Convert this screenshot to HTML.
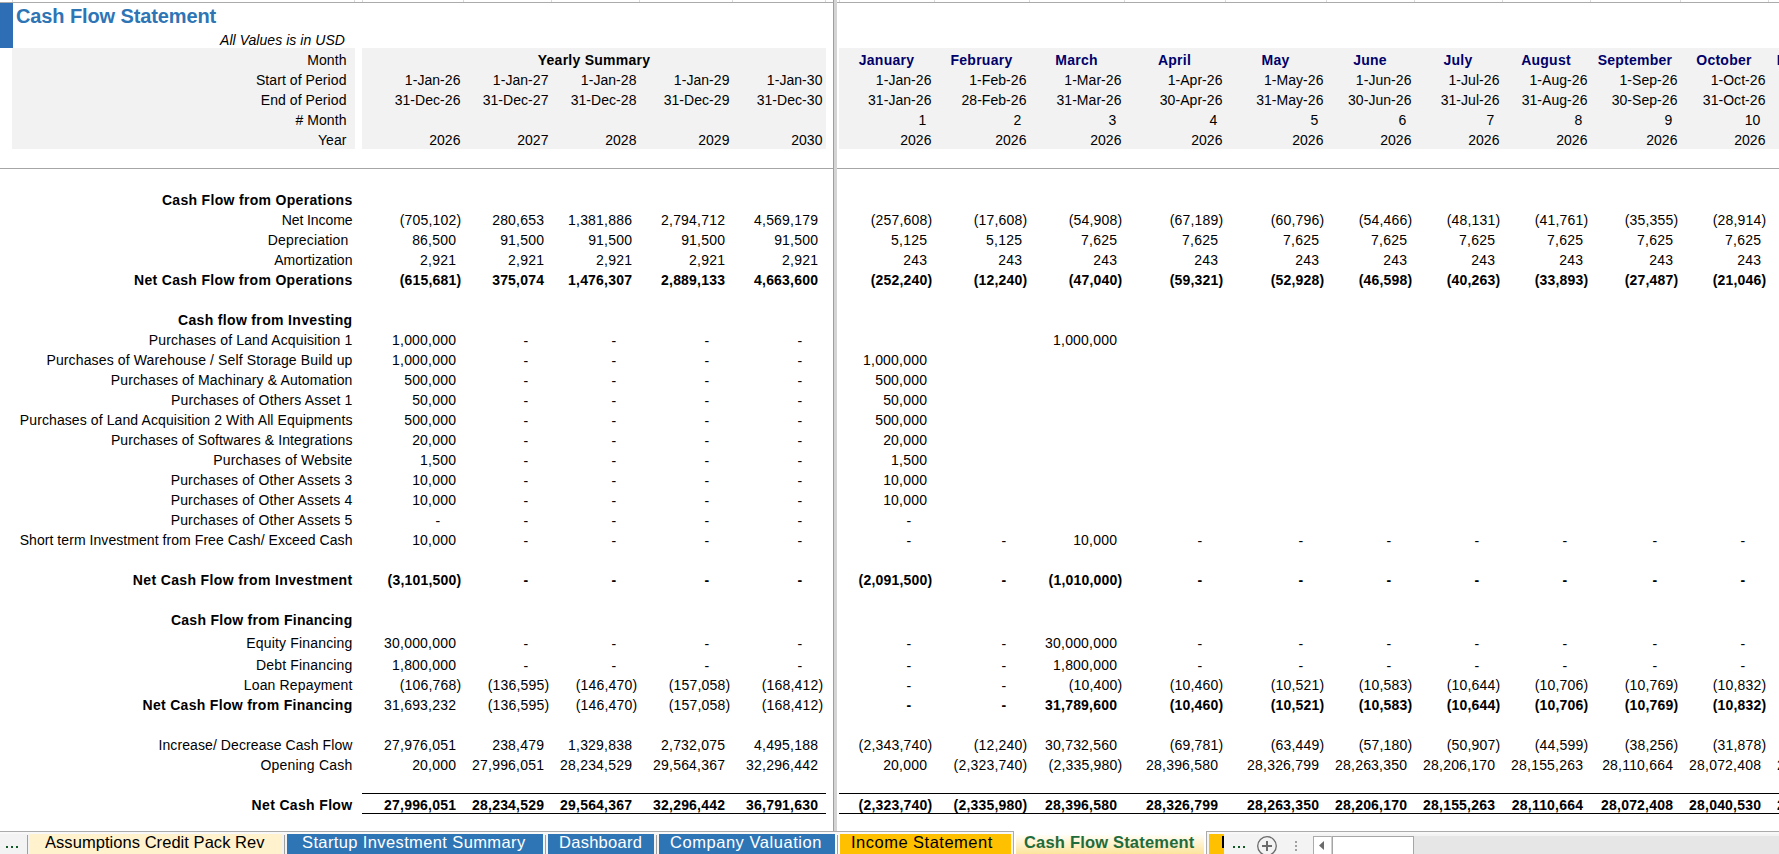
<!DOCTYPE html>
<html><head><meta charset="utf-8"><style>
html,body{margin:0;padding:0;}
body{width:1779px;height:854px;overflow:hidden;position:relative;background:#fff;font-family:"Liberation Sans",sans-serif;font-size:14px;color:#000;}
.r{position:absolute;}
.t{position:absolute;white-space:pre;line-height:0;height:0;text-align:right;letter-spacing:0.05px;}
.tc{position:absolute;white-space:pre;line-height:0;height:0;width:300px;text-align:center;}
.b{font-weight:bold;}
.num{letter-spacing:0.2px;}
.lab{letter-spacing:0.07px;}
.lab.b{letter-spacing:0.25px;}
.navy{color:#00006a;}
.tt{font-size:16.5px;line-height:0;white-space:pre;}
</style></head><body>
<!-- top gridline -->
<div class="r" style="left:0;top:2px;width:1779px;height:1px;background:#ababab"></div>
<div class="r" style="left:12px;top:0;width:1px;height:2px;background:#dadada"></div><div class="r" style="left:354px;top:0;width:1px;height:2px;background:#dadada"></div><div class="r" style="left:362px;top:0;width:1px;height:2px;background:#dadada"></div><div class="r" style="left:463px;top:0;width:1px;height:2px;background:#dadada"></div><div class="r" style="left:551px;top:0;width:1px;height:2px;background:#dadada"></div><div class="r" style="left:639px;top:0;width:1px;height:2px;background:#dadada"></div><div class="r" style="left:732px;top:0;width:1px;height:2px;background:#dadada"></div><div class="r" style="left:825px;top:0;width:1px;height:2px;background:#dadada"></div><div class="r" style="left:839px;top:0;width:1px;height:2px;background:#dadada"></div><div class="r" style="left:934px;top:0;width:1px;height:2px;background:#dadada"></div><div class="r" style="left:1029px;top:0;width:1px;height:2px;background:#dadada"></div><div class="r" style="left:1124px;top:0;width:1px;height:2px;background:#dadada"></div><div class="r" style="left:1225px;top:0;width:1px;height:2px;background:#dadada"></div><div class="r" style="left:1326px;top:0;width:1px;height:2px;background:#dadada"></div><div class="r" style="left:1414px;top:0;width:1px;height:2px;background:#dadada"></div><div class="r" style="left:1502px;top:0;width:1px;height:2px;background:#dadada"></div><div class="r" style="left:1590px;top:0;width:1px;height:2px;background:#dadada"></div><div class="r" style="left:1680px;top:0;width:1px;height:2px;background:#dadada"></div><div class="r" style="left:1768px;top:0;width:1px;height:2px;background:#dadada"></div>
<!-- blue bar -->
<div class="r" style="left:0;top:3px;width:13px;height:45px;background:#2e6eb5"></div>
<!-- gray header fills -->
<div class="r" style="left:12px;top:48px;width:343px;height:101px;background:#f2f2f2"></div>
<div class="r" style="left:362px;top:48px;width:464px;height:101px;background:#f2f2f2"></div>
<div class="r" style="left:839px;top:48px;width:940px;height:101px;background:#f2f2f2"></div>
<!-- freeze line horizontal -->
<div class="r" style="left:0;top:168px;width:1779px;height:1px;background:#a6a6a6"></div>
<!-- net cash flow borders -->
<div class="r" style="left:362px;top:793px;width:464px;height:1px;background:#000"></div>
<div class="r" style="left:362px;top:813px;width:464px;height:1px;background:#000"></div>
<div class="r" style="left:839px;top:793px;width:940px;height:1px;background:#000"></div>
<div class="r" style="left:839px;top:813px;width:940px;height:1px;background:#000"></div>
<!-- split bar -->
<div class="r" style="left:833px;top:0;width:1px;height:832px;background:#9e9e9e"></div>
<div class="r" style="left:834px;top:0;width:3px;height:832px;background:#d4d4d4"></div>
<!-- title -->
<div class="r" style="left:16px;top:16px;line-height:0;font-size:20px;font-weight:bold;letter-spacing:-0.11px;color:#2e75b6;white-space:pre">Cash Flow Statement</div>
<div class="t" style="right:1434px;top:40px;font-style:italic">All Values is in USD</div>
<div class="t b lab" style="right:1426.50px;top:200px;letter-spacing:0.31px">Cash Flow from Operations</div>
<div class="t lab" style="right:1426.50px;top:220px;letter-spacing:-0.08px">Net Income</div>
<div class="t  num" style="right:1317.60px;top:220px;padding-right:0.00px">(705,102)</div>
<div class="t  num" style="right:1230.20px;top:220px;padding-right:4.66px">280,653</div>
<div class="t  num" style="right:1142.20px;top:220px;padding-right:4.66px">1,381,886</div>
<div class="t  num" style="right:1049.20px;top:220px;padding-right:4.66px">2,794,712</div>
<div class="t  num" style="right:956.20px;top:220px;padding-right:4.66px">4,569,179</div>
<div class="t  num" style="right:846.60px;top:220px;padding-right:0.00px">(257,608)</div>
<div class="t  num" style="right:751.60px;top:220px;padding-right:0.00px">(17,608)</div>
<div class="t  num" style="right:656.60px;top:220px;padding-right:0.00px">(54,908)</div>
<div class="t  num" style="right:555.60px;top:220px;padding-right:0.00px">(67,189)</div>
<div class="t  num" style="right:454.60px;top:220px;padding-right:0.00px">(60,796)</div>
<div class="t  num" style="right:366.60px;top:220px;padding-right:0.00px">(54,466)</div>
<div class="t  num" style="right:278.60px;top:220px;padding-right:0.00px">(48,131)</div>
<div class="t  num" style="right:190.60px;top:220px;padding-right:0.00px">(41,761)</div>
<div class="t  num" style="right:100.60px;top:220px;padding-right:0.00px">(35,355)</div>
<div class="t  num" style="right:12.60px;top:220px;padding-right:0.00px">(28,914)</div>
<div class="t lab" style="right:1426.50px;top:240px;letter-spacing:0.178px">Depreciation&nbsp;</div>
<div class="t  num" style="right:1318.20px;top:240px;padding-right:4.66px">86,500</div>
<div class="t  num" style="right:1230.20px;top:240px;padding-right:4.66px">91,500</div>
<div class="t  num" style="right:1142.20px;top:240px;padding-right:4.66px">91,500</div>
<div class="t  num" style="right:1049.20px;top:240px;padding-right:4.66px">91,500</div>
<div class="t  num" style="right:956.20px;top:240px;padding-right:4.66px">91,500</div>
<div class="t  num" style="right:847.20px;top:240px;padding-right:4.66px">5,125</div>
<div class="t  num" style="right:752.20px;top:240px;padding-right:4.66px">5,125</div>
<div class="t  num" style="right:657.20px;top:240px;padding-right:4.66px">7,625</div>
<div class="t  num" style="right:556.20px;top:240px;padding-right:4.66px">7,625</div>
<div class="t  num" style="right:455.20px;top:240px;padding-right:4.66px">7,625</div>
<div class="t  num" style="right:367.20px;top:240px;padding-right:4.66px">7,625</div>
<div class="t  num" style="right:279.20px;top:240px;padding-right:4.66px">7,625</div>
<div class="t  num" style="right:191.20px;top:240px;padding-right:4.66px">7,625</div>
<div class="t  num" style="right:101.20px;top:240px;padding-right:4.66px">7,625</div>
<div class="t  num" style="right:13.20px;top:240px;padding-right:4.66px">7,625</div>
<div class="t lab" style="right:1426.50px;top:260px;letter-spacing:0.037px">Amortization</div>
<div class="t  num" style="right:1318.20px;top:260px;padding-right:4.66px">2,921</div>
<div class="t  num" style="right:1230.20px;top:260px;padding-right:4.66px">2,921</div>
<div class="t  num" style="right:1142.20px;top:260px;padding-right:4.66px">2,921</div>
<div class="t  num" style="right:1049.20px;top:260px;padding-right:4.66px">2,921</div>
<div class="t  num" style="right:956.20px;top:260px;padding-right:4.66px">2,921</div>
<div class="t  num" style="right:847.20px;top:260px;padding-right:4.66px">243</div>
<div class="t  num" style="right:752.20px;top:260px;padding-right:4.66px">243</div>
<div class="t  num" style="right:657.20px;top:260px;padding-right:4.66px">243</div>
<div class="t  num" style="right:556.20px;top:260px;padding-right:4.66px">243</div>
<div class="t  num" style="right:455.20px;top:260px;padding-right:4.66px">243</div>
<div class="t  num" style="right:367.20px;top:260px;padding-right:4.66px">243</div>
<div class="t  num" style="right:279.20px;top:260px;padding-right:4.66px">243</div>
<div class="t  num" style="right:191.20px;top:260px;padding-right:4.66px">243</div>
<div class="t  num" style="right:101.20px;top:260px;padding-right:4.66px">243</div>
<div class="t  num" style="right:13.20px;top:260px;padding-right:4.66px">243</div>
<div class="t b lab" style="right:1426.50px;top:280px;letter-spacing:0.319px">Net Cash Flow from Operations</div>
<div class="t b num" style="right:1317.60px;top:280px;padding-right:0.00px">(615,681)</div>
<div class="t b num" style="right:1230.20px;top:280px;padding-right:4.66px">375,074</div>
<div class="t b num" style="right:1142.20px;top:280px;padding-right:4.66px">1,476,307</div>
<div class="t b num" style="right:1049.20px;top:280px;padding-right:4.66px">2,889,133</div>
<div class="t b num" style="right:956.20px;top:280px;padding-right:4.66px">4,663,600</div>
<div class="t b num" style="right:846.60px;top:280px;padding-right:0.00px">(252,240)</div>
<div class="t b num" style="right:751.60px;top:280px;padding-right:0.00px">(12,240)</div>
<div class="t b num" style="right:656.60px;top:280px;padding-right:0.00px">(47,040)</div>
<div class="t b num" style="right:555.60px;top:280px;padding-right:0.00px">(59,321)</div>
<div class="t b num" style="right:454.60px;top:280px;padding-right:0.00px">(52,928)</div>
<div class="t b num" style="right:366.60px;top:280px;padding-right:0.00px">(46,598)</div>
<div class="t b num" style="right:278.60px;top:280px;padding-right:0.00px">(40,263)</div>
<div class="t b num" style="right:190.60px;top:280px;padding-right:0.00px">(33,893)</div>
<div class="t b num" style="right:100.60px;top:280px;padding-right:0.00px">(27,487)</div>
<div class="t b num" style="right:12.60px;top:280px;padding-right:0.00px">(21,046)</div>
<div class="t b lab" style="right:1426.50px;top:320px;letter-spacing:0.333px">Cash flow from Investing</div>
<div class="t lab" style="right:1426.50px;top:340px;letter-spacing:0.144px">Purchases of Land Acquisition 1</div>
<div class="t  num" style="right:1318.20px;top:340px;padding-right:4.66px">1,000,000</div>
<div class="t " style="right:1230.60px;top:341px;padding-right:20.23px">-</div>
<div class="t " style="right:1142.60px;top:341px;padding-right:20.23px">-</div>
<div class="t " style="right:1049.60px;top:341px;padding-right:20.23px">-</div>
<div class="t " style="right:956.60px;top:341px;padding-right:20.23px">-</div>
<div class="t  num" style="right:657.20px;top:340px;padding-right:4.66px">1,000,000</div>
<div class="t lab" style="right:1426.50px;top:360px;letter-spacing:0.135px">Purchases of Warehouse / Self Storage Build up</div>
<div class="t  num" style="right:1318.20px;top:360px;padding-right:4.66px">1,000,000</div>
<div class="t " style="right:1230.60px;top:361px;padding-right:20.23px">-</div>
<div class="t " style="right:1142.60px;top:361px;padding-right:20.23px">-</div>
<div class="t " style="right:1049.60px;top:361px;padding-right:20.23px">-</div>
<div class="t " style="right:956.60px;top:361px;padding-right:20.23px">-</div>
<div class="t  num" style="right:847.20px;top:360px;padding-right:4.66px">1,000,000</div>
<div class="t lab" style="right:1426.50px;top:380px;letter-spacing:0.124px">Purchases of Machinary &amp; Automation</div>
<div class="t  num" style="right:1318.20px;top:380px;padding-right:4.66px">500,000</div>
<div class="t " style="right:1230.60px;top:381px;padding-right:20.23px">-</div>
<div class="t " style="right:1142.60px;top:381px;padding-right:20.23px">-</div>
<div class="t " style="right:1049.60px;top:381px;padding-right:20.23px">-</div>
<div class="t " style="right:956.60px;top:381px;padding-right:20.23px">-</div>
<div class="t  num" style="right:847.20px;top:380px;padding-right:4.66px">500,000</div>
<div class="t lab" style="right:1426.50px;top:400px;letter-spacing:0.148px">Purchases of Others Asset 1</div>
<div class="t  num" style="right:1318.20px;top:400px;padding-right:4.66px">50,000</div>
<div class="t " style="right:1230.60px;top:401px;padding-right:20.23px">-</div>
<div class="t " style="right:1142.60px;top:401px;padding-right:20.23px">-</div>
<div class="t " style="right:1049.60px;top:401px;padding-right:20.23px">-</div>
<div class="t " style="right:956.60px;top:401px;padding-right:20.23px">-</div>
<div class="t  num" style="right:847.20px;top:400px;padding-right:4.66px">50,000</div>
<div class="t lab" style="right:1426.50px;top:420px;letter-spacing:0.099px">Purchases of Land Acquisition 2 With All Equipments</div>
<div class="t  num" style="right:1318.20px;top:420px;padding-right:4.66px">500,000</div>
<div class="t " style="right:1230.60px;top:421px;padding-right:20.23px">-</div>
<div class="t " style="right:1142.60px;top:421px;padding-right:20.23px">-</div>
<div class="t " style="right:1049.60px;top:421px;padding-right:20.23px">-</div>
<div class="t " style="right:956.60px;top:421px;padding-right:20.23px">-</div>
<div class="t  num" style="right:847.20px;top:420px;padding-right:4.66px">500,000</div>
<div class="t lab" style="right:1426.50px;top:440px;letter-spacing:0.094px">Purchases of Softwares &amp; Integrations</div>
<div class="t  num" style="right:1318.20px;top:440px;padding-right:4.66px">20,000</div>
<div class="t " style="right:1230.60px;top:441px;padding-right:20.23px">-</div>
<div class="t " style="right:1142.60px;top:441px;padding-right:20.23px">-</div>
<div class="t " style="right:1049.60px;top:441px;padding-right:20.23px">-</div>
<div class="t " style="right:956.60px;top:441px;padding-right:20.23px">-</div>
<div class="t  num" style="right:847.20px;top:440px;padding-right:4.66px">20,000</div>
<div class="t lab" style="right:1426.50px;top:460px;letter-spacing:0.165px">Purchases of Website</div>
<div class="t  num" style="right:1318.20px;top:460px;padding-right:4.66px">1,500</div>
<div class="t " style="right:1230.60px;top:461px;padding-right:20.23px">-</div>
<div class="t " style="right:1142.60px;top:461px;padding-right:20.23px">-</div>
<div class="t " style="right:1049.60px;top:461px;padding-right:20.23px">-</div>
<div class="t " style="right:956.60px;top:461px;padding-right:20.23px">-</div>
<div class="t  num" style="right:847.20px;top:460px;padding-right:4.66px">1,500</div>
<div class="t lab" style="right:1426.50px;top:480px;letter-spacing:0.163px">Purchases of Other Assets 3</div>
<div class="t  num" style="right:1318.20px;top:480px;padding-right:4.66px">10,000</div>
<div class="t " style="right:1230.60px;top:481px;padding-right:20.23px">-</div>
<div class="t " style="right:1142.60px;top:481px;padding-right:20.23px">-</div>
<div class="t " style="right:1049.60px;top:481px;padding-right:20.23px">-</div>
<div class="t " style="right:956.60px;top:481px;padding-right:20.23px">-</div>
<div class="t  num" style="right:847.20px;top:480px;padding-right:4.66px">10,000</div>
<div class="t lab" style="right:1426.50px;top:500px;letter-spacing:0.163px">Purchases of Other Assets 4</div>
<div class="t  num" style="right:1318.20px;top:500px;padding-right:4.66px">10,000</div>
<div class="t " style="right:1230.60px;top:501px;padding-right:20.23px">-</div>
<div class="t " style="right:1142.60px;top:501px;padding-right:20.23px">-</div>
<div class="t " style="right:1049.60px;top:501px;padding-right:20.23px">-</div>
<div class="t " style="right:956.60px;top:501px;padding-right:20.23px">-</div>
<div class="t  num" style="right:847.20px;top:500px;padding-right:4.66px">10,000</div>
<div class="t lab" style="right:1426.50px;top:520px;letter-spacing:0.163px">Purchases of Other Assets 5</div>
<div class="t " style="right:1318.60px;top:521px;padding-right:20.23px">-</div>
<div class="t " style="right:1230.60px;top:521px;padding-right:20.23px">-</div>
<div class="t " style="right:1142.60px;top:521px;padding-right:20.23px">-</div>
<div class="t " style="right:1049.60px;top:521px;padding-right:20.23px">-</div>
<div class="t " style="right:956.60px;top:521px;padding-right:20.23px">-</div>
<div class="t " style="right:847.60px;top:521px;padding-right:20.23px">-</div>
<div class="t lab" style="right:1426.50px;top:540px;letter-spacing:0.06px">Short term Investment from Free Cash/ Exceed Cash</div>
<div class="t  num" style="right:1318.20px;top:540px;padding-right:4.66px">10,000</div>
<div class="t " style="right:1230.60px;top:541px;padding-right:20.23px">-</div>
<div class="t " style="right:1142.60px;top:541px;padding-right:20.23px">-</div>
<div class="t " style="right:1049.60px;top:541px;padding-right:20.23px">-</div>
<div class="t " style="right:956.60px;top:541px;padding-right:20.23px">-</div>
<div class="t " style="right:847.60px;top:541px;padding-right:20.23px">-</div>
<div class="t " style="right:752.60px;top:541px;padding-right:20.23px">-</div>
<div class="t  num" style="right:657.20px;top:540px;padding-right:4.66px">10,000</div>
<div class="t " style="right:556.60px;top:541px;padding-right:20.23px">-</div>
<div class="t " style="right:455.60px;top:541px;padding-right:20.23px">-</div>
<div class="t " style="right:367.60px;top:541px;padding-right:20.23px">-</div>
<div class="t " style="right:279.60px;top:541px;padding-right:20.23px">-</div>
<div class="t " style="right:191.60px;top:541px;padding-right:20.23px">-</div>
<div class="t " style="right:101.60px;top:541px;padding-right:20.23px">-</div>
<div class="t " style="right:13.60px;top:541px;padding-right:20.23px">-</div>
<div class="t b lab" style="right:1426.50px;top:580px;letter-spacing:0.36px">Net Cash Flow from Investment</div>
<div class="t b num" style="right:1317.60px;top:580px;padding-right:0.00px">(3,101,500)</div>
<div class="t b" style="right:1230.60px;top:580px;padding-right:20.23px">-</div>
<div class="t b" style="right:1142.60px;top:580px;padding-right:20.23px">-</div>
<div class="t b" style="right:1049.60px;top:580px;padding-right:20.23px">-</div>
<div class="t b" style="right:956.60px;top:580px;padding-right:20.23px">-</div>
<div class="t b num" style="right:846.60px;top:580px;padding-right:0.00px">(2,091,500)</div>
<div class="t b" style="right:752.60px;top:580px;padding-right:20.23px">-</div>
<div class="t b num" style="right:656.60px;top:580px;padding-right:0.00px">(1,010,000)</div>
<div class="t b" style="right:556.60px;top:580px;padding-right:20.23px">-</div>
<div class="t b" style="right:455.60px;top:580px;padding-right:20.23px">-</div>
<div class="t b" style="right:367.60px;top:580px;padding-right:20.23px">-</div>
<div class="t b" style="right:279.60px;top:580px;padding-right:20.23px">-</div>
<div class="t b" style="right:191.60px;top:580px;padding-right:20.23px">-</div>
<div class="t b" style="right:101.60px;top:580px;padding-right:20.23px">-</div>
<div class="t b" style="right:13.60px;top:580px;padding-right:20.23px">-</div>
<div class="t b lab" style="right:1426.50px;top:620px;letter-spacing:0.275px">Cash Flow from Financing</div>
<div class="t lab" style="right:1426.50px;top:643px;letter-spacing:0.17px">Equity Financing</div>
<div class="t  num" style="right:1318.20px;top:643px;padding-right:4.66px">30,000,000</div>
<div class="t " style="right:1230.60px;top:644px;padding-right:20.23px">-</div>
<div class="t " style="right:1142.60px;top:644px;padding-right:20.23px">-</div>
<div class="t " style="right:1049.60px;top:644px;padding-right:20.23px">-</div>
<div class="t " style="right:956.60px;top:644px;padding-right:20.23px">-</div>
<div class="t " style="right:847.60px;top:644px;padding-right:20.23px">-</div>
<div class="t " style="right:752.60px;top:644px;padding-right:20.23px">-</div>
<div class="t  num" style="right:657.20px;top:643px;padding-right:4.66px">30,000,000</div>
<div class="t " style="right:556.60px;top:644px;padding-right:20.23px">-</div>
<div class="t " style="right:455.60px;top:644px;padding-right:20.23px">-</div>
<div class="t " style="right:367.60px;top:644px;padding-right:20.23px">-</div>
<div class="t " style="right:279.60px;top:644px;padding-right:20.23px">-</div>
<div class="t " style="right:191.60px;top:644px;padding-right:20.23px">-</div>
<div class="t " style="right:101.60px;top:644px;padding-right:20.23px">-</div>
<div class="t " style="right:13.60px;top:644px;padding-right:20.23px">-</div>
<div class="t lab" style="right:1426.50px;top:665px;letter-spacing:0.163px">Debt Financing</div>
<div class="t  num" style="right:1318.20px;top:665px;padding-right:4.66px">1,800,000</div>
<div class="t " style="right:1230.60px;top:666px;padding-right:20.23px">-</div>
<div class="t " style="right:1142.60px;top:666px;padding-right:20.23px">-</div>
<div class="t " style="right:1049.60px;top:666px;padding-right:20.23px">-</div>
<div class="t " style="right:956.60px;top:666px;padding-right:20.23px">-</div>
<div class="t " style="right:847.60px;top:666px;padding-right:20.23px">-</div>
<div class="t " style="right:752.60px;top:666px;padding-right:20.23px">-</div>
<div class="t  num" style="right:657.20px;top:665px;padding-right:4.66px">1,800,000</div>
<div class="t " style="right:556.60px;top:666px;padding-right:20.23px">-</div>
<div class="t " style="right:455.60px;top:666px;padding-right:20.23px">-</div>
<div class="t " style="right:367.60px;top:666px;padding-right:20.23px">-</div>
<div class="t " style="right:279.60px;top:666px;padding-right:20.23px">-</div>
<div class="t " style="right:191.60px;top:666px;padding-right:20.23px">-</div>
<div class="t " style="right:101.60px;top:666px;padding-right:20.23px">-</div>
<div class="t " style="right:13.60px;top:666px;padding-right:20.23px">-</div>
<div class="t lab" style="right:1426.50px;top:685px;letter-spacing:0.149px">Loan Repayment</div>
<div class="t  num" style="right:1317.60px;top:685px;padding-right:0.00px">(106,768)</div>
<div class="t  num" style="right:1229.60px;top:685px;padding-right:0.00px">(136,595)</div>
<div class="t  num" style="right:1141.60px;top:685px;padding-right:0.00px">(146,470)</div>
<div class="t  num" style="right:1048.60px;top:685px;padding-right:0.00px">(157,058)</div>
<div class="t  num" style="right:955.60px;top:685px;padding-right:0.00px">(168,412)</div>
<div class="t " style="right:847.60px;top:686px;padding-right:20.23px">-</div>
<div class="t " style="right:752.60px;top:686px;padding-right:20.23px">-</div>
<div class="t  num" style="right:656.60px;top:685px;padding-right:0.00px">(10,400)</div>
<div class="t  num" style="right:555.60px;top:685px;padding-right:0.00px">(10,460)</div>
<div class="t  num" style="right:454.60px;top:685px;padding-right:0.00px">(10,521)</div>
<div class="t  num" style="right:366.60px;top:685px;padding-right:0.00px">(10,583)</div>
<div class="t  num" style="right:278.60px;top:685px;padding-right:0.00px">(10,644)</div>
<div class="t  num" style="right:190.60px;top:685px;padding-right:0.00px">(10,706)</div>
<div class="t  num" style="right:100.60px;top:685px;padding-right:0.00px">(10,769)</div>
<div class="t  num" style="right:12.60px;top:685px;padding-right:0.00px">(10,832)</div>
<div class="t b lab" style="right:1426.50px;top:705px;letter-spacing:0.304px">Net Cash Flow from Financing</div>
<div class="t  num" style="right:1318.20px;top:705px;padding-right:4.66px">31,693,232</div>
<div class="t  num" style="right:1229.60px;top:705px;padding-right:0.00px">(136,595)</div>
<div class="t  num" style="right:1141.60px;top:705px;padding-right:0.00px">(146,470)</div>
<div class="t  num" style="right:1048.60px;top:705px;padding-right:0.00px">(157,058)</div>
<div class="t  num" style="right:955.60px;top:705px;padding-right:0.00px">(168,412)</div>
<div class="t b" style="right:847.60px;top:705px;padding-right:20.23px">-</div>
<div class="t b" style="right:752.60px;top:705px;padding-right:20.23px">-</div>
<div class="t b num" style="right:657.20px;top:705px;padding-right:4.66px">31,789,600</div>
<div class="t b num" style="right:555.60px;top:705px;padding-right:0.00px">(10,460)</div>
<div class="t b num" style="right:454.60px;top:705px;padding-right:0.00px">(10,521)</div>
<div class="t b num" style="right:366.60px;top:705px;padding-right:0.00px">(10,583)</div>
<div class="t b num" style="right:278.60px;top:705px;padding-right:0.00px">(10,644)</div>
<div class="t b num" style="right:190.60px;top:705px;padding-right:0.00px">(10,706)</div>
<div class="t b num" style="right:100.60px;top:705px;padding-right:0.00px">(10,769)</div>
<div class="t b num" style="right:12.60px;top:705px;padding-right:0.00px">(10,832)</div>
<div class="t lab" style="right:1426.50px;top:745px;letter-spacing:0.095px">Increase/ Decrease Cash Flow</div>
<div class="t  num" style="right:1318.20px;top:745px;padding-right:4.66px">27,976,051</div>
<div class="t  num" style="right:1230.20px;top:745px;padding-right:4.66px">238,479</div>
<div class="t  num" style="right:1142.20px;top:745px;padding-right:4.66px">1,329,838</div>
<div class="t  num" style="right:1049.20px;top:745px;padding-right:4.66px">2,732,075</div>
<div class="t  num" style="right:956.20px;top:745px;padding-right:4.66px">4,495,188</div>
<div class="t  num" style="right:846.60px;top:745px;padding-right:0.00px">(2,343,740)</div>
<div class="t  num" style="right:751.60px;top:745px;padding-right:0.00px">(12,240)</div>
<div class="t  num" style="right:657.20px;top:745px;padding-right:4.66px">30,732,560</div>
<div class="t  num" style="right:555.60px;top:745px;padding-right:0.00px">(69,781)</div>
<div class="t  num" style="right:454.60px;top:745px;padding-right:0.00px">(63,449)</div>
<div class="t  num" style="right:366.60px;top:745px;padding-right:0.00px">(57,180)</div>
<div class="t  num" style="right:278.60px;top:745px;padding-right:0.00px">(50,907)</div>
<div class="t  num" style="right:190.60px;top:745px;padding-right:0.00px">(44,599)</div>
<div class="t  num" style="right:100.60px;top:745px;padding-right:0.00px">(38,256)</div>
<div class="t  num" style="right:12.60px;top:745px;padding-right:0.00px">(31,878)</div>
<div class="t lab" style="right:1426.50px;top:765px;letter-spacing:0.212px">Opening Cash</div>
<div class="t  num" style="right:1318.20px;top:765px;padding-right:4.66px">20,000</div>
<div class="t  num" style="right:1230.20px;top:765px;padding-right:4.66px">27,996,051</div>
<div class="t  num" style="right:1142.20px;top:765px;padding-right:4.66px">28,234,529</div>
<div class="t  num" style="right:1049.20px;top:765px;padding-right:4.66px">29,564,367</div>
<div class="t  num" style="right:956.20px;top:765px;padding-right:4.66px">32,296,442</div>
<div class="t  num" style="right:847.20px;top:765px;padding-right:4.66px">20,000</div>
<div class="t  num" style="right:751.60px;top:765px;padding-right:0.00px">(2,323,740)</div>
<div class="t  num" style="right:656.60px;top:765px;padding-right:0.00px">(2,335,980)</div>
<div class="t  num" style="right:556.20px;top:765px;padding-right:4.66px">28,396,580</div>
<div class="t  num" style="right:455.20px;top:765px;padding-right:4.66px">28,326,799</div>
<div class="t  num" style="right:367.20px;top:765px;padding-right:4.66px">28,263,350</div>
<div class="t  num" style="right:279.20px;top:765px;padding-right:4.66px">28,206,170</div>
<div class="t  num" style="right:191.20px;top:765px;padding-right:4.66px">28,155,263</div>
<div class="t  num" style="right:101.20px;top:765px;padding-right:4.66px">28,110,664</div>
<div class="t  num" style="right:13.20px;top:765px;padding-right:4.66px">28,072,408</div>
<div class="t  num" style="right:-74.80px;top:765px;padding-right:4.66px">28,040,530</div>
<div class="t b lab" style="right:1426.50px;top:805px;letter-spacing:0.342px">Net Cash Flow</div>
<div class="t b num" style="right:1318.20px;top:805px;padding-right:4.66px">27,996,051</div>
<div class="t b num" style="right:1230.20px;top:805px;padding-right:4.66px">28,234,529</div>
<div class="t b num" style="right:1142.20px;top:805px;padding-right:4.66px">29,564,367</div>
<div class="t b num" style="right:1049.20px;top:805px;padding-right:4.66px">32,296,442</div>
<div class="t b num" style="right:956.20px;top:805px;padding-right:4.66px">36,791,630</div>
<div class="t b num" style="right:846.60px;top:805px;padding-right:0.00px">(2,323,740)</div>
<div class="t b num" style="right:751.60px;top:805px;padding-right:0.00px">(2,335,980)</div>
<div class="t b num" style="right:657.20px;top:805px;padding-right:4.66px">28,396,580</div>
<div class="t b num" style="right:556.20px;top:805px;padding-right:4.66px">28,326,799</div>
<div class="t b num" style="right:455.20px;top:805px;padding-right:4.66px">28,263,350</div>
<div class="t b num" style="right:367.20px;top:805px;padding-right:4.66px">28,206,170</div>
<div class="t b num" style="right:279.20px;top:805px;padding-right:4.66px">28,155,263</div>
<div class="t b num" style="right:191.20px;top:805px;padding-right:4.66px">28,110,664</div>
<div class="t b num" style="right:101.20px;top:805px;padding-right:4.66px">28,072,408</div>
<div class="t b num" style="right:13.20px;top:805px;padding-right:4.66px">28,040,530</div>
<div class="t b num" style="right:-74.80px;top:805px;padding-right:4.66px">28,072,408</div>
<div class="t lab" style="right:1432.50px;top:60px;padding-right:0.00px">Month</div>
<div class="t lab" style="right:1432.50px;top:80px;padding-right:0.00px">Start of Period</div>
<div class="t lab" style="right:1432.50px;top:100px;padding-right:0.00px">End of Period</div>
<div class="t lab" style="right:1432.50px;top:120px;padding-right:0.00px"># Month</div>
<div class="t lab" style="right:1432.50px;top:140px;padding-right:0.00px">Year</div>
<div class="tc b lab" style="left:444px;top:60px">Yearly Summary</div>
<div class="t " style="right:1318.50px;top:80px;padding-right:0.00px">1-Jan-26</div>
<div class="t " style="right:1318.50px;top:100px;padding-right:0.00px">31-Dec-26</div>
<div class="t " style="right:1318.50px;top:140px;padding-right:0.00px">2026</div>
<div class="t " style="right:1230.50px;top:80px;padding-right:0.00px">1-Jan-27</div>
<div class="t " style="right:1230.50px;top:100px;padding-right:0.00px">31-Dec-27</div>
<div class="t " style="right:1230.50px;top:140px;padding-right:0.00px">2027</div>
<div class="t " style="right:1142.50px;top:80px;padding-right:0.00px">1-Jan-28</div>
<div class="t " style="right:1142.50px;top:100px;padding-right:0.00px">31-Dec-28</div>
<div class="t " style="right:1142.50px;top:140px;padding-right:0.00px">2028</div>
<div class="t " style="right:1049.50px;top:80px;padding-right:0.00px">1-Jan-29</div>
<div class="t " style="right:1049.50px;top:100px;padding-right:0.00px">31-Dec-29</div>
<div class="t " style="right:1049.50px;top:140px;padding-right:0.00px">2029</div>
<div class="t " style="right:956.50px;top:80px;padding-right:0.00px">1-Jan-30</div>
<div class="t " style="right:956.50px;top:100px;padding-right:0.00px">31-Dec-30</div>
<div class="t " style="right:956.50px;top:140px;padding-right:0.00px">2030</div>
<div class="tc b lab navy" style="left:736.5px;top:60px">January</div>
<div class="t " style="right:847.50px;top:80px;padding-right:0.00px">1-Jan-26</div>
<div class="t " style="right:847.50px;top:100px;padding-right:0.00px">31-Jan-26</div>
<div class="t " style="right:848.00px;top:120px;padding-right:4.66px">1</div>
<div class="t " style="right:847.50px;top:140px;padding-right:0.00px">2026</div>
<div class="tc b lab navy" style="left:831.5px;top:60px">February</div>
<div class="t " style="right:752.50px;top:80px;padding-right:0.00px">1-Feb-26</div>
<div class="t " style="right:752.50px;top:100px;padding-right:0.00px">28-Feb-26</div>
<div class="t " style="right:753.00px;top:120px;padding-right:4.66px">2</div>
<div class="t " style="right:752.50px;top:140px;padding-right:0.00px">2026</div>
<div class="tc b lab navy" style="left:926.5px;top:60px">March</div>
<div class="t " style="right:657.50px;top:80px;padding-right:0.00px">1-Mar-26</div>
<div class="t " style="right:657.50px;top:100px;padding-right:0.00px">31-Mar-26</div>
<div class="t " style="right:658.00px;top:120px;padding-right:4.66px">3</div>
<div class="t " style="right:657.50px;top:140px;padding-right:0.00px">2026</div>
<div class="tc b lab navy" style="left:1024.5px;top:60px">April</div>
<div class="t " style="right:556.50px;top:80px;padding-right:0.00px">1-Apr-26</div>
<div class="t " style="right:556.50px;top:100px;padding-right:0.00px">30-Apr-26</div>
<div class="t " style="right:557.00px;top:120px;padding-right:4.66px">4</div>
<div class="t " style="right:556.50px;top:140px;padding-right:0.00px">2026</div>
<div class="tc b lab navy" style="left:1125.5px;top:60px">May</div>
<div class="t " style="right:455.50px;top:80px;padding-right:0.00px">1-May-26</div>
<div class="t " style="right:455.50px;top:100px;padding-right:0.00px">31-May-26</div>
<div class="t " style="right:456.00px;top:120px;padding-right:4.66px">5</div>
<div class="t " style="right:455.50px;top:140px;padding-right:0.00px">2026</div>
<div class="tc b lab navy" style="left:1220.0px;top:60px">June</div>
<div class="t " style="right:367.50px;top:80px;padding-right:0.00px">1-Jun-26</div>
<div class="t " style="right:367.50px;top:100px;padding-right:0.00px">30-Jun-26</div>
<div class="t " style="right:368.00px;top:120px;padding-right:4.66px">6</div>
<div class="t " style="right:367.50px;top:140px;padding-right:0.00px">2026</div>
<div class="tc b lab navy" style="left:1308.0px;top:60px">July</div>
<div class="t " style="right:279.50px;top:80px;padding-right:0.00px">1-Jul-26</div>
<div class="t " style="right:279.50px;top:100px;padding-right:0.00px">31-Jul-26</div>
<div class="t " style="right:280.00px;top:120px;padding-right:4.66px">7</div>
<div class="t " style="right:279.50px;top:140px;padding-right:0.00px">2026</div>
<div class="tc b lab navy" style="left:1396.0px;top:60px">August</div>
<div class="t " style="right:191.50px;top:80px;padding-right:0.00px">1-Aug-26</div>
<div class="t " style="right:191.50px;top:100px;padding-right:0.00px">31-Aug-26</div>
<div class="t " style="right:192.00px;top:120px;padding-right:4.66px">8</div>
<div class="t " style="right:191.50px;top:140px;padding-right:0.00px">2026</div>
<div class="tc b lab navy" style="left:1485.0px;top:60px">September</div>
<div class="t " style="right:101.50px;top:80px;padding-right:0.00px">1-Sep-26</div>
<div class="t " style="right:101.50px;top:100px;padding-right:0.00px">30-Sep-26</div>
<div class="t " style="right:102.00px;top:120px;padding-right:4.66px">9</div>
<div class="t " style="right:101.50px;top:140px;padding-right:0.00px">2026</div>
<div class="tc b lab navy" style="left:1574.0px;top:60px">October</div>
<div class="t " style="right:13.50px;top:80px;padding-right:0.00px">1-Oct-26</div>
<div class="t " style="right:13.50px;top:100px;padding-right:0.00px">31-Oct-26</div>
<div class="t " style="right:14.00px;top:120px;padding-right:4.66px">10</div>
<div class="t " style="right:13.50px;top:140px;padding-right:0.00px">2026</div>
<div class="tc b lab navy" style="left:1662.0px;top:60px">November</div>
<div class="t " style="right:-74.50px;top:80px;padding-right:0.00px">1-Nov-26</div>
<div class="t " style="right:-74.50px;top:100px;padding-right:0.00px">30-Nov-26</div>
<div class="t " style="right:-74.00px;top:120px;padding-right:4.66px">11</div>
<div class="t " style="right:-74.50px;top:140px;padding-right:0.00px">2026</div>
<!-- tab bar -->
<div class="r" style="left:0;top:831px;width:1779px;height:23px;background:#f3f3f3"></div>
<div class="r" style="left:0;top:832px;width:1779px;height:2px;background:#f8f8f8"></div>
<div class="r" style="left:0;top:831px;width:1014px;height:1px;background:#ababab"></div>
<div class="r" style="left:1206px;top:831px;width:573px;height:1px;background:#ababab"></div>
<!-- dots left -->
<div class="r" style="left:6px;top:846px;width:2px;height:2px;background:#0e5b25"></div>
<div class="r" style="left:11px;top:846px;width:2px;height:2px;background:#0e5b25"></div>
<div class="r" style="left:16px;top:846px;width:2px;height:2px;background:#0e5b25"></div>
<div class="r" style="left:27px;top:835px;width:1px;height:19px;background:#a0a0a0"></div>
<!-- tab1 -->
<div class="r" style="left:30px;top:834px;width:252px;height:20px;background:#fff2cc"></div>
<div class="r" style="left:284px;top:835px;width:1px;height:19px;background:#a0a0a0"></div>
<div class="r" style="left:287px;top:834px;width:256px;height:20px;background:#2e75b6"></div>
<div class="r" style="left:545px;top:835px;width:1px;height:19px;background:#a0a0a0"></div>
<div class="r" style="left:548px;top:834px;width:106px;height:20px;background:#2e75b6"></div>
<div class="r" style="left:656px;top:835px;width:1px;height:19px;background:#a0a0a0"></div>
<div class="r" style="left:659px;top:834px;width:176px;height:20px;background:#2e75b6"></div>
<div class="r" style="left:835px;top:834px;width:5px;height:20px;background:#fafafa"></div>
<div class="r" style="left:837px;top:835px;width:1px;height:19px;background:#a0a0a0"></div>
<div class="r" style="left:840px;top:834px;width:171px;height:20px;background:#ffc000"></div>
<!-- active tab -->
<div class="r" style="left:1013px;top:831px;width:1px;height:23px;background:#ababab"></div>
<div class="r" style="left:1014px;top:831px;width:192px;height:23px;background:#fff"></div>
<div class="r" style="left:1016px;top:835px;width:188px;height:19px;background:linear-gradient(#fffdf6,#fde49c)"></div>
<div class="r" style="left:1206px;top:831px;width:1px;height:23px;background:#ababab"></div>
<!-- partial tab -->
<div class="r" style="left:1209px;top:834px;width:15px;height:20px;background:#ffc000"></div>
<div class="r" style="left:1222px;top:836px;width:2px;height:12px;background:#000"></div>
<div class="r" style="left:1233px;top:846px;width:2px;height:2px;background:#0e5b25"></div>
<div class="r" style="left:1238px;top:846px;width:2px;height:2px;background:#0e5b25"></div>
<div class="r" style="left:1243px;top:846px;width:2px;height:2px;background:#0e5b25"></div>
<svg class="r" style="left:1250px;top:831px" width="40" height="23" viewBox="0 0 40 23">
<circle cx="17" cy="15" r="9.3" fill="none" stroke="#6b6b6b" stroke-width="1.3"/>
<rect x="12" y="14" width="10" height="2" fill="#6b6b6b"/>
<rect x="16" y="10" width="2" height="10" fill="#6b6b6b"/>
</svg>
<div class="r" style="left:1295px;top:841px;width:2px;height:2px;background:#a0a0a0"></div>
<div class="r" style="left:1295px;top:845px;width:2px;height:2px;background:#a0a0a0"></div>
<div class="r" style="left:1295px;top:849px;width:2px;height:2px;background:#a0a0a0"></div>
<!-- scroll -->
<div class="r" style="left:1414px;top:836px;width:365px;height:18px;background:#e6e6e6"></div>
<div class="r" style="left:1313px;top:836px;width:19px;height:18px;background:#fff;box-sizing:border-box;border-left:1px solid #ababab;border-top:1px solid #ababab;border-right:1px solid #d0d0d0"></div>
<div class="r" style="left:1332px;top:836px;width:82px;height:18px;background:#fff;box-sizing:border-box;border:1px solid #a6a6a6;border-bottom:none"></div>
<svg class="r" style="left:1318px;top:840px" width="8" height="12" viewBox="0 0 8 12"><polygon points="1,5.5 6,1 6,10" fill="#6b6b6b"/></svg>
<!-- tab texts -->
<div class="r tt" style="left:45px;top:842px;letter-spacing:0.05px;color:#000">Assumptions Credit Pack Rev</div>
<div class="r tt" style="left:302px;top:842px;letter-spacing:0.38px;color:#fff">Startup Investment Summary</div>
<div class="r tt" style="left:559px;top:842px;letter-spacing:0.27px;color:#fff">Dashboard</div>
<div class="r tt" style="left:670px;top:842px;letter-spacing:0.54px;color:#fff">Company Valuation</div>
<div class="r tt" style="left:851px;top:842px;letter-spacing:0.49px;color:#000">Income Statement</div>
<div class="r tt" style="left:1024px;top:842px;letter-spacing:0.19px;color:#1e6b3c;font-weight:bold">Cash Flow Statement</div>

</body></html>
